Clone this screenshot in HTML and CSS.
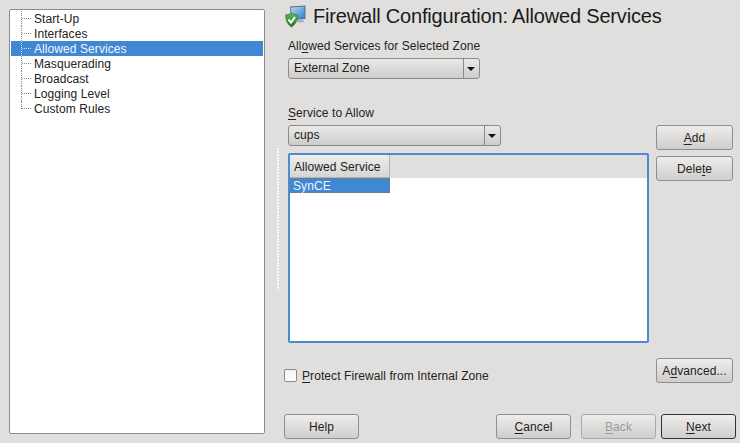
FILE: index.html
```html
<!DOCTYPE html>
<html>

<head>
  <meta charset="UTF-8">
  <title>Firewall Configuration: Allowed Services</title>
  <link rel="stylesheet" href="styles.css">
</head>

<body>
  <div class="tree">
    <div class="treeRow"><span class="twig"></span>Start-Up</div>
    <div class="treeRow"><span class="twig"></span>Interfaces</div>
    <div class="treeRow selected"><span class="twig"></span>Allowed Services</div>
    <div class="treeRow"><span class="twig"></span>Masquerading</div>
    <div class="treeRow"><span class="twig"></span>Broadcast</div>
    <div class="treeRow"><span class="twig"></span>Logging Level</div>
    <div class="treeRow lastRow"><span class="twig"></span>Custom Rules</div>
  </div>

  <div class="splitter"><div class="grip"></div></div>

  <div class="pane">
    <div class="titleRow">
      <svg class="titleIcon" width="22" height="24" viewBox="0 0 22 24">
        <defs>
          <linearGradient id="screen" x1="0" y1="0" x2="1" y2="1">
            <stop offset="0" stop-color="#b5daf7"/>
            <stop offset="1" stop-color="#2c7ccf"/>
          </linearGradient>
          <linearGradient id="shield" x1="0" y1="0" x2="0" y2="1">
            <stop offset="0" stop-color="#5fc04a"/>
            <stop offset="1" stop-color="#0f7a2a"/>
          </linearGradient>
        </defs>
        <path d="M5 2.500 L20.500 1.500 L20.500 15 L6 16 Z" fill="#5d6f80"/>
        <path d="M6 3.500 L19.500 2.600 L19.500 14 L7 15 Z" fill="url(#screen)"/>
        <path d="M12 16 L18 15.500 L19 18 L13 18.500 Z" fill="#a4aeb6"/>
        <path d="M6.500 9 C5 10.200 3 10.800 0.800 10.800 C0.500 16 2.500 20.500 6.500 23 C10.500 20.500 12.800 16 12.500 10.800 C10.500 10.800 8 10.200 6.500 9 Z" fill="url(#shield)" stroke="#4b5a4e" stroke-width="0.7"/>
        <path d="M3.500 15.500 L6 18.500 L10 13" fill="none" stroke="#fff" stroke-width="2"/>
      </svg>
      <h1 class="title">Firewall Configuration: Allowed Services</h1>
    </div>

    <div class="content">
      <div class="mainCol">
        <div class="label firstLabel">All<u>o</u>wed Services for Selected Zone</div>
        <div class="combo zoneCombo"><span class="comboText">External Zone</span><span class="comboArrow"></span></div>
        <div class="label secondLabel"><u>S</u>ervice to Allow</div>
        <div class="combo serviceCombo"><span class="comboText">cups</span><span class="comboArrow"></span></div>
        <div class="list">
          <div class="listHead"><div class="headCell">Allowed Service</div></div>
          <div class="listRow">SynCE</div>
        </div>
        <label class="checkRow"><span class="checkBox"></span><span><u>P</u>rotect Firewall from Internal Zone</span></label>
      </div>
      <div class="sideCol">
        <div class="butt"><span><u>A</u>dd</span></div>
        <div class="butt"><span>Dele<u>t</u>e</span></div>
        <div class="butt advanced"><span>A<u>d</u>vanced...</span></div>
      </div>
    </div>

    <div class="footer">
      <div class="butt"><span>Help</span></div>
      <div class="footerRight">
        <div class="butt"><span><u>C</u>ancel</span></div>
        <div class="butt disabled"><span><u>B</u>ack</span></div>
        <div class="butt default"><span><u>N</u>ext</span></div>
      </div>
    </div>
  </div>
</body>

</html>
```

FILE: styles.css
```css
* {
  box-sizing: border-box;
}

body {
  margin: 0;
  width: 740px;
  height: 443px;
  padding: 0 4px 4px 9px;
  display: flex;
  overflow: hidden;
  background-color: #e0dfdd;
  color: #222;
  font-family: "Liberation Sans", Arial, sans-serif;
  font-size: 12px;
  letter-spacing: 0.08px;
}

u {
  text-underline-offset: 2px;
}

/* left tree */
.tree {
  width: 256px;
  height: 425px;
  margin-top: 9px;
  padding: 1px;
  background-color: white;
  border: 1px solid #8c8c8c;
  border-radius: 2px;
}

.treeRow {
  display: flex;
  height: 15px;
  line-height: 16px;
  padding-left: 10px;
}

.twig {
  position: relative;
  width: 13px;
  border-left: 1px dotted #888;
}

.twig::after {
  content: "";
  position: absolute;
  left: 0;
  top: 7px;
  width: 9px;
  border-top: 1px dotted #888;
}

.lastRow .twig {
  height: 8px;
}

.selected {
  background-color: #4088d4;
  color: #f2f6fb;
}

.selected .twig {
  border-left-color: #cfe0f3;
}

.selected .twig::after {
  border-top-color: #cfe0f3;
}

/* splitter */
.splitter {
  width: 19px;
  padding: 148px 0 0 12px;
}

.grip {
  width: 2px;
  height: 142px;
  background: repeating-linear-gradient(to bottom, #fafafa 0, #fafafa 2px, transparent 2px, transparent 3px);
}

/* right side */
.pane {
  width: 452px;
  display: flex;
  flex-direction: column;
}

.titleRow {
  display: flex;
  height: 31px;
  padding: 4px 0 0 1px;
}

.titleIcon {
  flex: none;
}

.title {
  margin: 0 0 0 6px;
  font-size: 20px;
  line-height: 24px;
  font-weight: normal;
  letter-spacing: -0.18px;
  color: #1a1a1a;
}

.content {
  display: flex;
  gap: 7px;
  height: 352px;
}

.mainCol {
  width: 365px;
  padding-left: 4px;
}

.label {
  height: 14px;
  line-height: 14px;
}

.firstLabel {
  margin-top: 8px;
}

.secondLabel {
  margin-top: 27px;
}

.combo {
  display: flex;
  height: 21px;
  margin-top: 5px;
  border: 1px solid #8a8a88;
  border-radius: 3px;
  background: linear-gradient(to bottom, #eceae8, #cdccca);
}

.zoneCombo {
  width: 192px;
}

.serviceCombo {
  width: 213px;
}

.comboText {
  flex: 1;
  padding-left: 5px;
  line-height: 19px;
}

.comboArrow {
  position: relative;
  width: 16px;
  border-left: 1px solid #8a8a88;
}

.comboArrow::after {
  content: "";
  position: absolute;
  left: 3px;
  top: 8px;
  border-style: solid;
  border-width: 4px 4px 0;
  border-color: #111 transparent transparent;
}

.list {
  width: 361px;
  height: 190px;
  margin-top: 7px;
  background-color: white;
  border: 2px solid #4a8cd2;
  border-radius: 2px;
}

.listHead {
  height: 23px;
  background-color: #e0dfdd;
}

.headCell {
  width: 100px;
  height: 23px;
  padding-left: 4px;
  line-height: 24px;
  border: 1px solid #b4b3b1;
  border-top: 0;
  border-left: 0;
  background: linear-gradient(to bottom, #eeedeb, #d6d5d3);
}

.listRow {
  width: 100px;
  height: 15px;
  padding-left: 3px;
  line-height: 16px;
  background-color: #4088d4;
  color: #f2f6fb;
  outline: 1px dotted #8a7a50;
  outline-offset: -1px;
}

.checkRow {
  display: flex;
  align-items: center;
  gap: 5px;
  margin: 26px 0 0 -4px;
  height: 13px;
}

.checkBox {
  width: 13px;
  height: 13px;
  border: 1px solid #8a8a88;
  border-radius: 2px;
  background: linear-gradient(to bottom, #f4f4f3, #ffffff);
}

.sideCol {
  width: 77px;
  display: flex;
  flex-direction: column;
  gap: 6px;
  padding-top: 94px;
}

.butt {
  display: flex;
  justify-content: center;
  align-items: center;
  height: 25px;
  width: 75px;
  border: 1px solid #8e8e8c;
  border-radius: 3px;
  background: linear-gradient(to bottom, #eeedeb, #cfcecc);
}

.sideCol .butt {
  width: 77px;
}

.advanced {
  margin-top: 171px;
}

.footer {
  display: flex;
  justify-content: space-between;
  margin-top: 31px;
}

.footerRight {
  display: flex;
  gap: 10px;
}

.footerRight .default {
  margin-left: -5px;
  border-color: #333;
}

.disabled {
  color: #9a9a98;
  border-color: #a8a8a6;
}
```
